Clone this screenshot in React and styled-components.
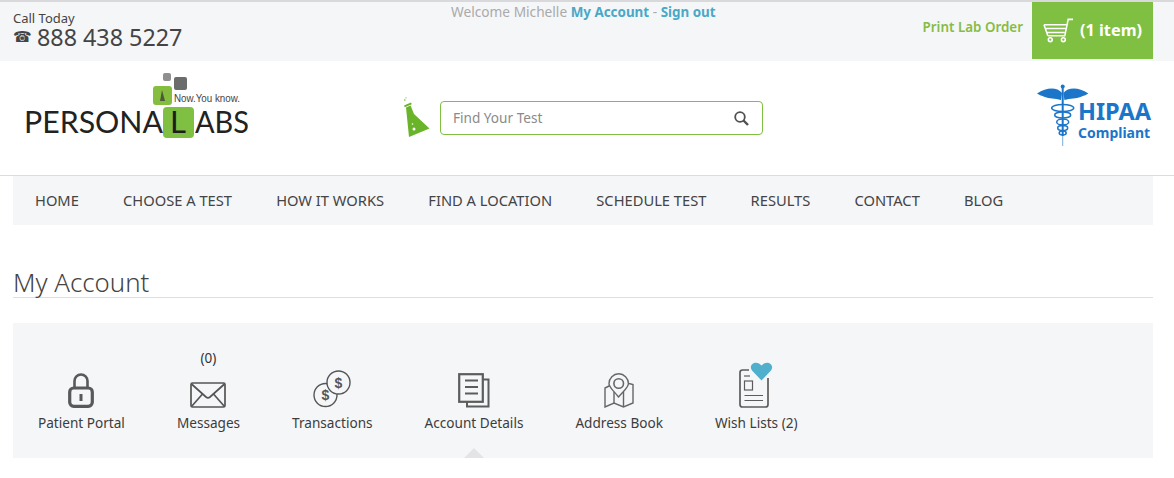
import React from "react";
import styled, { createGlobalStyle } from "styled-components";

const GlobalStyle = createGlobalStyle`
  html, body { margin: 0; padding: 0; background: #fff; }
  body { font-family: "Noto Sans", "Open Sans", sans-serif; color: #444; }
  * { box-sizing: border-box; }
`;

const NAV_ITEMS = ["HOME", "CHOOSE A TEST", "HOW IT WORKS", "FIND A LOCATION", "SCHEDULE TEST", "RESULTS", "CONTACT", "BLOG"];

const LockIcon = () => (
  <svg width="26" height="35" viewBox="0 0 26 35" fill="none">
    <path d="M6.5 15V8a6.5 6.5 0 0 1 13 0v7" stroke="#595959" strokeWidth="2.6" />
    <rect x="1.7" y="15" width="22.6" height="18.3" rx="4" stroke="#595959" strokeWidth="3.2" />
    <rect x="11.5" y="21" width="3" height="7" fill="#595959" />
  </svg>
);

const MailIcon = () => (
  <svg width="36" height="26" viewBox="0 0 36 26" fill="none" stroke="#555" strokeWidth="1.7">
    <rect x="1" y="1" width="34" height="24" rx="1.5" />
    <path d="M1.5 2l14.5 13q2 1.6 4 0L34.5 2M1.5 24.5L12.5 12M34.5 24.5L23.5 12" />
  </svg>
);

const CoinsIcon = () => (
  <svg width="38" height="38" viewBox="0 0 38 38" fill="none" stroke="#555" strokeWidth="1.4">
    <circle cx="12.5" cy="25" r="11.5" />
    <circle cx="25.5" cy="12.5" r="11.5" fill="#f5f6f8" />
    <text x="12.5" y="30" textAnchor="middle" fontFamily="Liberation Sans" fontSize="14" fontWeight="700" fill="#555" stroke="none">$</text>
    <text x="25.5" y="17.5" textAnchor="middle" fontFamily="Liberation Sans" fontSize="14" fontWeight="700" fill="#555" stroke="none">$</text>
  </svg>
);

const DetailsIcon = () => (
  <svg width="32" height="35" viewBox="0 0 32 35" fill="none" stroke="#5c5c5c">
    <path d="M25 6.500h5.500v27H9V29" strokeWidth="2" />
    <rect x="1.200" y="1.200" width="23.600" height="27.600" strokeWidth="2.200" />
    <path d="M7 7.500h13M7 14h13M7 20.500h13" strokeWidth="2" />
  </svg>
);

const AddressIcon = () => (
  <svg width="30" height="35" viewBox="0 0 30 35" fill="none" stroke="#666" strokeWidth="1.400">
    <path d="M14.500 24C9 17 5 14.500 5 10.500a9.700 9.700 0 0 1 19.400 0c0 4-4 6.500-9.900 13.500z" />
    <circle cx="14.700" cy="10.500" r="4.800" strokeWidth="1.600" />
    <path d="M6 12.500L1 15v19l9-4 9.500 4 9.500-4V11.500l-4-1" />
    <path d="M10 30V19M19.500 34V19" />
  </svg>
);

const WishIcon = () => (
  <svg width="35" height="46" viewBox="0 0 35 46" fill="none" stroke="#5c5c5c">
    <path d="M10 8H3.500Q1 8 1 10.500V42.500Q1 45 3.500 45H26.500Q29 45 29 42.500V16" strokeWidth="1.700" />
    <path d="M5 14h6" strokeWidth="1.200" />
    <rect x="5.500" y="19" width="8" height="9" strokeWidth="1.200" />
    <path d="M5.500 33.500H24M5.500 38.500H24" strokeWidth="1.200" />
    <path d="M22.500 18.500L13 8.500C9.500 4 14.500 -1.500 20 1.500L22.500 3.500L25 1.500C30.500 -1.500 35.500 4 32 8.500z" fill="#4fafcc" stroke="none" />
  </svg>
);

const CartIcon = () => (
  <svg width="31" height="25" viewBox="0 0 32 25" fill="none" stroke="#fff" strokeWidth="1.600">
    <path d="M31 1h-5l-3.500 17H5" />
    <path d="M1 6.500h23.500M3 10.500h20.500M4 14.500h18.500M1 6.500l3 8.500 1 3" />
    <circle cx="7.500" cy="22" r="2" />
    <circle cx="21" cy="22" r="2" />
  </svg>
);

const SearchIcon = () => (
  <svg width="15" height="15" viewBox="0 0 15 15" fill="none" stroke="#505050">
    <circle cx="6" cy="6" r="4.800" strokeWidth="1.800" />
    <path d="M9.500 9.500L14 14" strokeWidth="2.400" />
  </svg>
);

const FlaskIcon = () => (
  <svg width="27" height="41" viewBox="0 0 27 41" fill="#6ab42a">
    <circle cx="1.800" cy="3" r="0.800" />
    <circle cx="3" cy="0.800" r="0.600" />
    <path d="M1 8.500l7-3 .8 1.700-7 3z" />
    <path d="M3 10.500l4.600-2L11 17l15.500 14.500L6 40z" />
    <circle cx="11" cy="32" r="1.500" fill="#fff" />
    <circle cx="9.500" cy="27" r="0.800" fill="#fff" />
  </svg>
);

const Logo = () => (
  <svg width="226" height="68" viewBox="0 0 226 68">
    <rect x="139" y="1" width="8" height="8" rx="2" fill="#8f8f8f" />
    <rect x="150" y="5" width="13" height="13" rx="2" fill="#6a6d6b" />
    <rect x="129" y="14" width="19" height="19" rx="3" fill="#85bd3f" />
    <path d="M138 18l3 11h-5z" fill="#4b5a38" />
    <rect x="139" y="35" width="31" height="31" rx="4" fill="#7fbf41" />
    <text x="150" y="29.500" textLength="66" lengthAdjust="spacingAndGlyphs" fontFamily="Liberation Sans" fontSize="10.500" fill="#444">Now.You know.</text>
    <text x="0" y="61" textLength="139" lengthAdjust="spacingAndGlyphs" fontFamily="Lato" fontWeight="400" fontSize="30" fill="#222">PERSONA</text>
    <text x="146" y="61" textLength="16" lengthAdjust="spacingAndGlyphs" fontFamily="Lato" fontWeight="400" fontSize="30" fill="#1d1d1d">L</text>
    <text x="171" y="61" textLength="54" lengthAdjust="spacingAndGlyphs" fontFamily="Lato" fontWeight="400" fontSize="30" fill="#222">ABS</text>
  </svg>
);

const WING = "M25 9C20 3 10 3 0 9.500C4 12 6 12 8 13C12 15 18 14 24 16Z";

const CaduceusIcon = () => (
  <svg width="54" height="63" viewBox="0 0 54 63" fill="none">
    <path d={WING} fill="#1b75c9" />
    <path d={WING} fill="#1b75c9" transform="translate(51.400 0) scale(-1 1)" />
    <circle cx="25.700" cy="2.500" r="2" fill="#1b75c9" />
    <path d="M25.700 3V52" stroke="#1b75c9" strokeWidth="2" />
    <path d="M25.700 52V62" stroke="#1b75c9" strokeWidth="1" strokeOpacity="0.600" />
    <g stroke="#1b75c9" strokeWidth="1.500">
      <ellipse cx="25.700" cy="24" rx="11" ry="3.500" />
      <ellipse cx="25.700" cy="31" rx="8" ry="3" />
      <ellipse cx="25.700" cy="38" rx="6" ry="3" />
      <ellipse cx="25.700" cy="44" rx="5" ry="2.500" />
      <ellipse cx="25.700" cy="49" rx="3.500" ry="2" />
    </g>
  </svg>
);

const ACCOUNT_ITEMS = [
  { label: "Patient Portal", icon: <LockIcon /> },
  { label: "Messages", icon: <MailIcon />, count: "(0)" },
  { label: "Transactions", icon: <CoinsIcon /> },
  { label: "Account Details", icon: <DetailsIcon />, active: true },
  { label: "Address Book", icon: <AddressIcon /> },
  { label: "Wish Lists (2)", icon: <WishIcon /> },
];

export default function App() {
  return (
    <Page>
      <GlobalStyle />
      <TopBar>
        <CallBlock>
          <CallLabel>Call Today</CallLabel>
          <PhoneRow>
            <PhoneGlyph>☎</PhoneGlyph>
            <PhoneNumber>888 438 5227</PhoneNumber>
          </PhoneRow>
        </CallBlock>
        <Welcome>
          Welcome Michelle <TealLink>My Account</TealLink> - <TealLink>Sign out</TealLink>
        </Welcome>
        <PrintLink>Print Lab Order</PrintLink>
        <CartButton>
          <CartIcon />
          <span>(1 item)</span>
        </CartButton>
      </TopBar>

      <LogoRow>
        <LogoWrap>
          <Logo />
        </LogoWrap>
        <SearchArea>
          <FlaskIcon />
          <SearchBox>
            <SearchPlaceholder>Find Your Test</SearchPlaceholder>
            <SearchIcon />
          </SearchBox>
        </SearchArea>
        <HipaaWrap>
          <CaduceusIcon />
          <HipaaText>
            <HipaaTitle>HIPAA</HipaaTitle>
            <HipaaSub>Compliant</HipaaSub>
          </HipaaText>
        </HipaaWrap>
      </LogoRow>

      <Content>
        <NavBar>
          {NAV_ITEMS.map((item) => (
            <NavItem key={item}>{item}</NavItem>
          ))}
        </NavBar>

        <Title>My Account</Title>

        <AccountPanel>
          {ACCOUNT_ITEMS.map((item) => (
            <AccountItem key={item.label} $active={item.active}>
              {item.count && <Count>{item.count}</Count>}
              <IconSlot>{item.icon}</IconSlot>
              <ItemLabel>{item.label}</ItemLabel>
            </AccountItem>
          ))}
        </AccountPanel>
      </Content>
    </Page>
  );
}

const Page = styled.div`
  width: 1174px;
  height: 478px;
  overflow: hidden;
  background: #fff;
`;

const TopBar = styled.div`
  display: flex;
  height: 61px;
  padding: 0 21px 0 13px;
  background: #f5f6f8;
  border-top: 2px solid #d9d9dc;
`;

const CallBlock = styled.div`
  width: 438px;
  padding-top: 9px;
`;

const CallLabel = styled.div`
  font-size: 13px;
  line-height: 14px;
  color: #444;
`;

const PhoneRow = styled.div`
  display: flex;
  align-items: center;
  gap: 7px;
  height: 24px;
`;

const PhoneGlyph = styled.span`
  width: 17px;
  font-family: "DejaVu Sans", sans-serif;
  font-size: 15px;
  line-height: 24px;
  font-weight: 700;
  color: #444;
`;

const PhoneNumber = styled.span`
  font-size: 23.300px;
  line-height: 24px;
  color: #444;
`;

const Welcome = styled.div`
  flex: 1;
  padding-top: 1px;
  font-size: 13.700px;
  line-height: 17px;
  color: #aaa;
`;

const TealLink = styled.span`
  color: #4aa8c7;
  font-size: 13.400px;
  font-weight: 700;
`;

const PrintLink = styled.div`
  padding: 16px 9px 0 0;
  font-size: 13.400px;
  line-height: 18px;
  font-weight: 600;
  color: #86bc45;
`;

const CartButton = styled.div`
  display: flex;
  align-items: center;
  justify-content: center;
  gap: 6px;
  width: 121px;
  height: 57px;
  background: #7fbf41;
  color: #fff;
  font-size: 16.300px;
  line-height: 22px;
  font-weight: 700;

  span {
    margin-bottom: 2px;
  }
`;

const LogoRow = styled.div`
  position: relative;
  display: flex;
  height: 115px;
  padding-left: 24px;
  border-bottom: 1px solid #dcdcdc;
`;

const LogoWrap = styled.div`
  width: 379px;
  padding-top: 11px;
`;

const SearchArea = styled.div`
  display: flex;
  align-items: flex-start;
  gap: 10px;
  width: 634px;
  padding-top: 36px;
`;

const SearchBox = styled.div`
  display: flex;
  align-items: center;
  justify-content: space-between;
  width: 323px;
  height: 34px;
  margin-top: 4px;
  padding: 0 13px 0 12px;
  background: #fff;
  border: 1px solid #7fbf41;
  border-radius: 4px;
`;

const SearchPlaceholder = styled.span`
  margin-bottom: 2px;
  font-size: 13.600px;
  color: #8a8a8a;
`;

const HipaaWrap = styled.div`
  display: flex;
  align-items: flex-start;
  padding-top: 23px;
`;

const HipaaText = styled.div`
  margin-left: -13px;
  padding-top: 17px;
  color: #1b75c9;
  font-weight: 700;
  white-space: nowrap;
`;

const HipaaTitle = styled.div`
  font-size: 23.500px;
  line-height: 21px;
`;

const HipaaSub = styled.div`
  margin-top: 3px;
  font-size: 14px;
  line-height: 16px;
`;

const Content = styled.div`
  padding: 0 21px 0 13px;
`;

const NavBar = styled.nav`
  display: flex;
  gap: 44.200px;
  height: 49px;
  padding: 0 22px 2px;
  align-items: center;
  background: #f5f6f8;
`;

const NavItem = styled.span`
  font-size: 14.700px;
  color: #444;
`;

const Title = styled.h1`
  margin: 0 0 25px;
  height: 73px;
  padding-top: 43px;
  font-size: 25.800px;
  line-height: 29px;
  font-weight: 300;
  color: #444;
  border-bottom: 1px solid #dedede;
`;

const AccountPanel = styled.div`
  display: flex;
  gap: 52px;
  height: 135px;
  padding: 0 25px;
  background: #f5f6f8;
`;

const AccountItem = styled.div`
  position: relative;
  display: flex;
  flex-direction: column;
  align-items: center;
  justify-content: flex-end;
  height: 109px;

  ${(p) =>
    p.$active &&
    `
    &::after {
      content: "";
      position: absolute;
      left: 50%;
      bottom: -26px;
      margin-left: -10px;
      border-left: 10px solid transparent;
      border-right: 10px solid transparent;
      border-bottom: 10px solid #e4e4e6;
    }
  `}
`;

const Count = styled.div`
  position: absolute;
  top: 26px;
  left: 50%;
  transform: translateX(-50%);
  font-size: 13.500px;
  line-height: 18px;
  color: #333;
`;

const IconSlot = styled.div`
  display: flex;
  align-items: flex-end;
  justify-content: center;
  height: 46px;
`;

const ItemLabel = styled.div`
  margin-top: 6px;
  font-size: 13.600px;
  line-height: 18px;
  color: #3c3c3c;
  white-space: nowrap;
`;
